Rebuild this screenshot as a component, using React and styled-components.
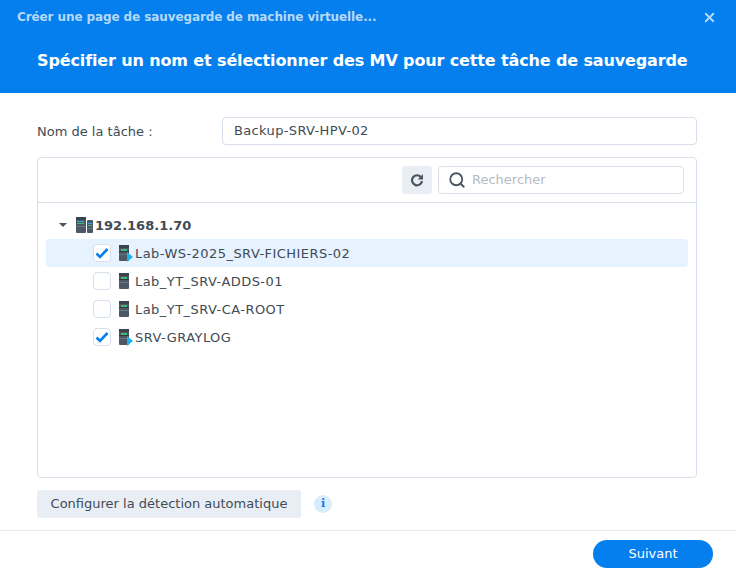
import React from "react"
import styled, { createGlobalStyle } from "styled-components"
import { Search, X } from "lucide-react"

const GlobalStyle = createGlobalStyle`
  html, body {
    margin: 0;
    padding: 0;
    background: #fff;
  }
  * {
    box-sizing: border-box;
  }
`

const vms = [
  { name: "Lab-WS-2025_SRV-FICHIERS-02", checked: true, running: true, selected: true },
  { name: "Lab_YT_SRV-ADDS-01" },
  { name: "Lab_YT_SRV-CA-ROOT" },
  { name: "SRV-GRAYLOG", checked: true, running: true },
]

function ServerIcon({ running }) {
  return (
    <svg width="15" height="17" viewBox="0 0 15 17">
      <rect x="1" y="0" width="10" height="16" rx="1" fill="#4d5866" />
      <rect x="1" y="0" width="10" height="3" fill="#3a434e" />
      <rect x="1" y="6" width="10" height="1" fill="#2f3842" />
      <rect x="1" y="9" width="10" height="1" fill="#6b7683" />
      <rect x="3" y="4" width="6" height="2" fill="#45b873" />
      {running && <path d="M9 7 L15 12 L9 17 Z" fill="#1fb1ec" />}
    </svg>
  )
}

function HostIcon() {
  return (
    <svg width="17" height="16" viewBox="0 0 17 16">
      <rect x="0" y="0" width="10" height="16" rx="1" fill="#4d5866" />
      <rect x="11" y="3" width="6" height="13" rx="1" fill="#4d5866" />
      <rect x="0" y="0" width="10" height="3" fill="#3a434e" />
      <rect x="1" y="4" width="7" height="1" fill="#1fb1ec" />
      <rect x="1" y="6" width="7" height="1" fill="#45b873" />
      <rect x="0" y="9" width="10" height="1" fill="#6b7683" />
      <rect x="12" y="6" width="4" height="1" fill="#1fb1ec" />
      <rect x="12" y="8" width="4" height="1" fill="#45b873" />
      <rect x="11" y="11" width="6" height="1" fill="#6b7683" />
    </svg>
  )
}

function RefreshIcon() {
  return (
    <svg width="14" height="14" viewBox="0 0 14 14">
      <path d="M11 4.2 A5 5 0 1 0 12 8" fill="none" stroke="#4a5560" strokeWidth="2.2" />
      <path d="M13 1 L13 6.4 L7.8 6.4 Z" fill="#4a5560" />
    </svg>
  )
}

function App() {
  return (
    <Dialog>
      <GlobalStyle />
      <Header>
        <TopLine>
          <SmallTitle>Créer une page de sauvegarde de machine virtuelle...</SmallTitle>
          <CloseIcon size={15} strokeWidth={3} />
        </TopLine>
        <Title>Spécifier un nom et sélectionner des MV pour cette tâche de sauvegarde</Title>
      </Header>

      <Body>
        <NameRow>
          <NameLabel>Nom de la tâche :</NameLabel>
          <NameInput>Backup-SRV-HPV-02</NameInput>
        </NameRow>

        <Panel>
          <Toolbar>
            <RefreshButton>
              <RefreshIcon />
            </RefreshButton>
            <SearchBox>
              <Search size={18} strokeWidth={2.4} color="#4a5560" />
              <Placeholder>Rechercher</Placeholder>
            </SearchBox>
          </Toolbar>
          <Tree>
            <RootRow>
              <Caret />
              <HostIcon />
              <RootName>192.168.1.70</RootName>
            </RootRow>
            {vms.map((vm) => (
              <VmRow key={vm.name} $selected={vm.selected}>
                <CheckBox>
                  {vm.checked && (
                    <svg width="14" height="12" viewBox="0 0 14 12">
                      <path d="M1.5 6.5 L5 10 L12.5 2" fill="none" stroke="#057fee" strokeWidth="2.6" />
                    </svg>
                  )}
                </CheckBox>
                <ServerIcon running={vm.running} />
                <VmName>{vm.name}</VmName>
              </VmRow>
            ))}
          </Tree>
        </Panel>

        <ActionRow>
          <GreyButton>Configurer la détection automatique</GreyButton>
          <InfoBadge>i</InfoBadge>
        </ActionRow>
      </Body>

      <Footer>
        <NextButton>Suivant</NextButton>
      </Footer>
    </Dialog>
  )
}

const Dialog = styled.div`
  width: 736px;
  height: 574px;
  display: flex;
  flex-direction: column;
  overflow: hidden;
  font-family: "DejaVu Sans", Verdana, sans-serif;
  font-size: 13px;
  color: #414b55;
  background: #fff;
`

const Header = styled.div`
  height: 93px;
  flex-shrink: 0;
  background: #057fee;
  padding: 9px 20px 0 17px;
`

const TopLine = styled.div`
  height: 16px;
  display: flex;
  align-items: center;
  justify-content: space-between;
`

const SmallTitle = styled.div`
  font-size: 12px;
  font-weight: 700;
  letter-spacing: -0.1px;
  color: #b4d9fa;
`

const CloseIcon = styled(X)`
  color: #b4d9fa;
  margin-right: -1px;
`

const Title = styled.div`
  margin: 25px 0 0 20px;
  font-size: 16px;
  line-height: 22px;
  font-weight: 700;
  letter-spacing: -0.13px;
  color: #fff;
  white-space: nowrap;
`

const Body = styled.div`
  flex: 1;
  padding: 24px 39px 12px 37px;
  display: flex;
  flex-direction: column;
`

const NameRow = styled.div`
  display: flex;
  align-items: center;
  height: 28px;
`

const NameLabel = styled.div`
  width: 185px;
`

const NameInput = styled.div`
  flex: 1;
  height: 28px;
  line-height: 26px;
  padding: 0 11px;
  letter-spacing: 0.35px;
  border: 1px solid #d7e0ea;
  border-radius: 4px;
`

const Panel = styled.div`
  height: 321px;
  margin-top: 12px;
  border: 1px solid #d7e0ea;
  border-radius: 4px;
`

const Toolbar = styled.div`
  height: 45px;
  padding: 8px 12px 0 0;
  display: flex;
  justify-content: flex-end;
  gap: 6px;
  border-bottom: 1px solid #d7e0ea;
`

const RefreshButton = styled.div`
  width: 30px;
  height: 28px;
  display: flex;
  align-items: center;
  justify-content: center;
  border-radius: 3px;
  background: #e9eef5;
`

const SearchBox = styled.div`
  width: 246px;
  height: 28px;
  padding: 0 9px;
  display: flex;
  align-items: center;
  gap: 6px;
  border: 1px solid #d7e0ea;
  border-radius: 4px;
`

const Placeholder = styled.span`
  color: #b5bbc2;
  font-size: 13px;
  line-height: 28px;
`

const Tree = styled.div`
  padding: 8px 8px 0;
`

const RootRow = styled.div`
  height: 28px;
  display: flex;
  align-items: center;
  padding-left: 13px;
`

const Caret = styled.div`
  width: 0;
  height: 0;
  margin-right: 9px;
  border-left: 4.5px solid transparent;
  border-right: 4.5px solid transparent;
  border-top: 4.5px solid #4a5560;
`

const RootName = styled.span`
  margin-left: 2px;
  font-weight: 700;
`

const VmRow = styled.div`
  height: 28px;
  display: flex;
  align-items: center;
  padding-left: 47px;
  border-radius: 4px;
  background: ${(p) => (p.$selected ? "#e6f2fd" : "transparent")};
`

const CheckBox = styled.div`
  width: 18px;
  height: 18px;
  margin-right: 7px;
  display: flex;
  align-items: center;
  justify-content: center;
  background: #fff;
  border: 1px solid #d7e0ea;
  border-radius: 4px;
`

const VmName = styled.span`
  margin-left: 2px;
  letter-spacing: 0.45px;
`

const ActionRow = styled.div`
  margin-top: 12px;
  display: flex;
  align-items: center;
`

const GreyButton = styled.div`
  width: 264px;
  height: 28px;
  line-height: 28px;
  text-align: center;
  border-radius: 3px;
  background: #e9eef5;
`

const InfoBadge = styled.div`
  width: 18px;
  height: 18px;
  margin-left: 13px;
  border-radius: 50%;
  background: #d9ecfd;
  color: #057fee;
  font-family: "DejaVu Serif", serif;
  font-size: 11px;
  font-weight: 700;
  line-height: 18px;
  text-align: center;
`

const Footer = styled.div`
  height: 44px;
  flex-shrink: 0;
  padding: 9px 23px 0 0;
  display: flex;
  justify-content: flex-end;
  border-top: 1px solid #e3e9f0;
`

const NextButton = styled.div`
  width: 120px;
  height: 28px;
  line-height: 28px;
  text-align: center;
  border-radius: 14px;
  background: #057fee;
  color: #fff;
`

export default App
